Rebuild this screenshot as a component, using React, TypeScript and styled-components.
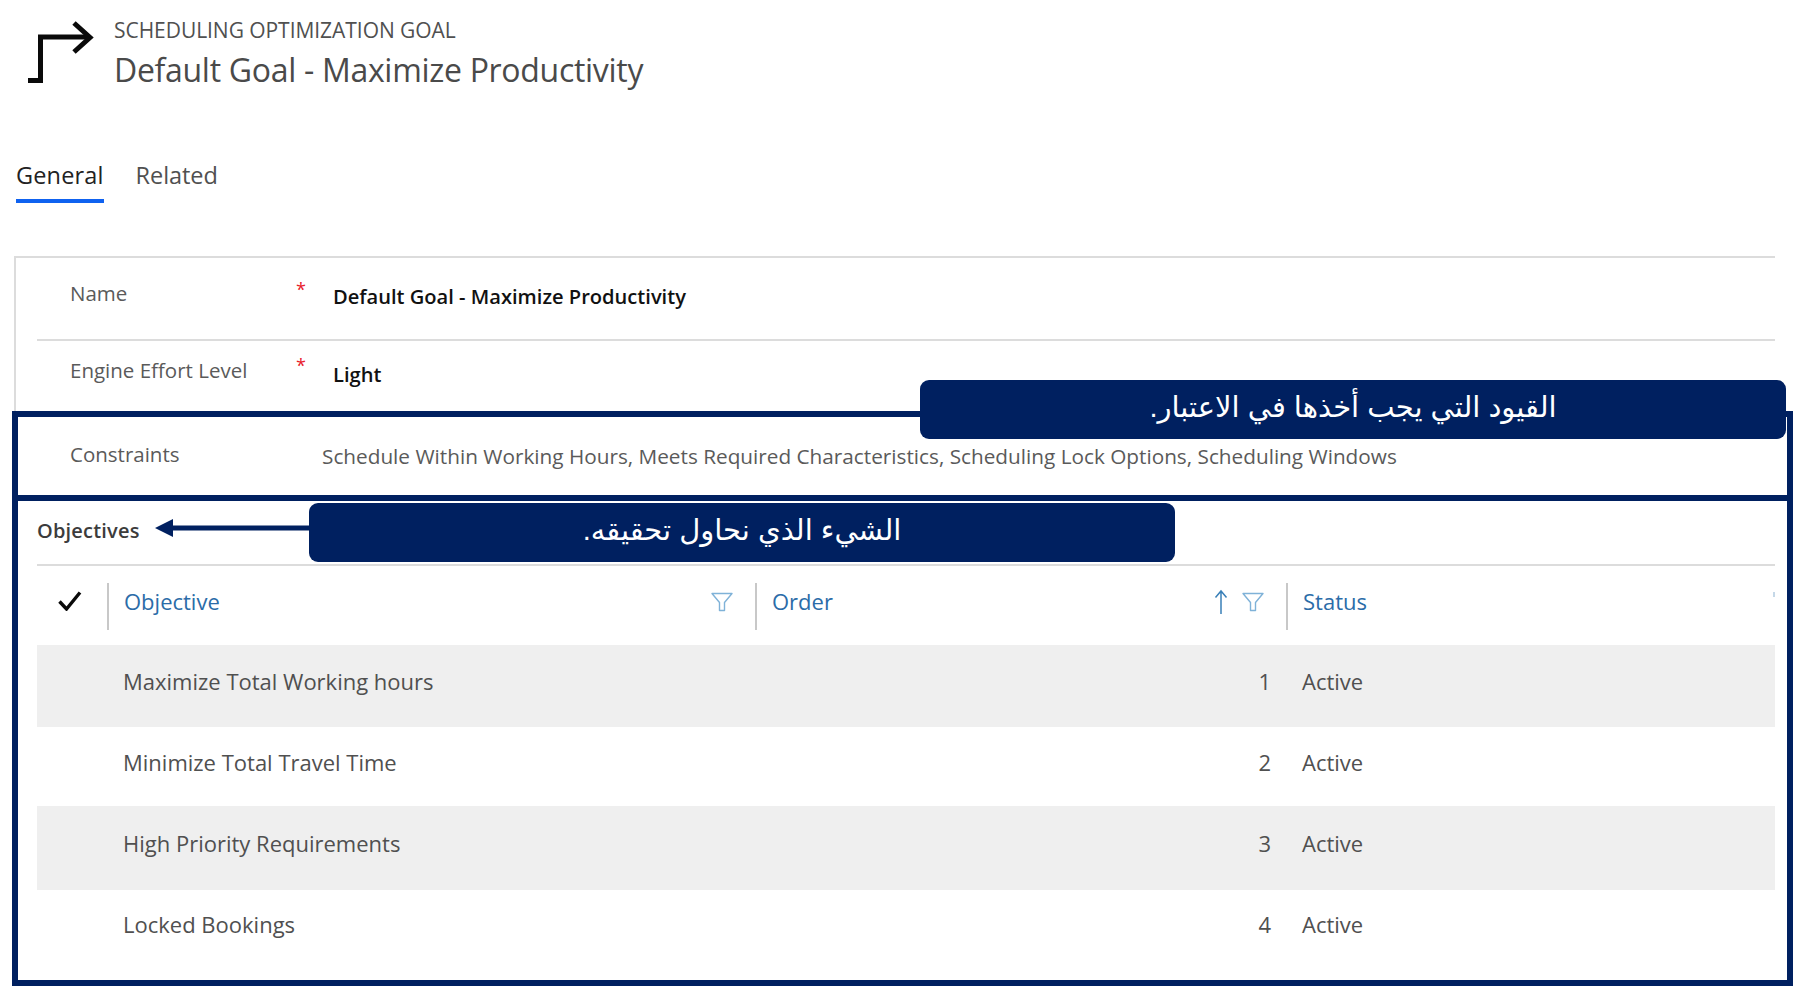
import React from "react";
import styled, { createGlobalStyle } from "styled-components";

const Global = createGlobalStyle`
  html, body { margin: 0; padding: 0; background: #fff; }
  body { font-family: "Open Sans", "Noto Sans", Arial, sans-serif; }
`;

const NAVY = "#002060";
const UI = `"Open Sans", "Noto Sans", sans-serif`;

const Page = styled.div`
  width: 1793px;
  height: 986px;
  overflow: hidden;
  background: #fff;
  color: #505050;
  font-family: ${UI};
`;

const Header = styled.header`
  display: flex;
  height: 160px;
  padding-left: 26px;
  box-sizing: border-box;
`;

const EntityIcon = styled.svg`
  width: 68px;
  height: 64px;
  margin-top: 20px;
  flex: none;
`;

const Titles = styled.div`
  margin-left: 20px;
  padding-top: 17px;
`;

const Eyebrow = styled.div`
  font-size: 21px;
  line-height: 26px;
  letter-spacing: -0.05px;
  color: #505050;
  white-space: nowrap;
`;

const Title = styled.h1`
  margin: 7px 0 0;
  font-size: 32px;
  line-height: 40px;
  font-weight: 400;
  letter-spacing: -0.3px;
  color: #4a4a4a;
  white-space: nowrap;
`;

const Tabs = styled.nav`
  display: flex;
  gap: 32px;
  height: 43px;
  padding-left: 16px;
`;

const Tab = styled.div<{ $active?: boolean }>`
  box-sizing: border-box;
  height: 43px;
  padding-top: 1px;
  font-size: 23.5px;
  line-height: 28px;
  letter-spacing: ${(p) => (p.$active ? "0.15px" : "-0.05px")};
  color: ${(p) => (p.$active ? "#222" : "#505050")};
  border-bottom: 4px solid ${(p) => (p.$active ? "#0f62f0" : "transparent")};
`;

const Card = styled.section`
  margin: 53px 0 0 14px;
  width: 1759px;
  border-top: 2px solid #dcdcdc;
  border-left: 2px solid #dcdcdc;
`;

const FieldRow = styled.div<{ $height: number; $divider?: boolean }>`
  box-sizing: border-box;
  height: ${(p) => p.$height}px;
  margin-left: 21px;
  padding-left: 33px;
  display: flex;
  align-items: flex-start;
  border-bottom: ${(p) => (p.$divider ? "2px solid #dcdcdc" : "none")};
`;

const FieldLabel = styled.div<{ $top: number }>`
  width: 226px;
  flex: none;
  margin-top: ${(p) => p.$top}px;
  font-size: 20.5px;
  line-height: 26px;
  color: #5a5a5a;
`;

const Required = styled.div<{ $top: number }>`
  width: 37px;
  flex: none;
  margin-top: ${(p) => p.$top}px;
  font-size: 18px;
  line-height: 18px;
  color: #e8202a;
`;

const FieldValue = styled.div<{ $top: number }>`
  margin-top: ${(p) => p.$top}px;
  font-size: 20.1px;
  line-height: 26px;
  font-weight: 600;
  color: #111;
  white-space: nowrap;
`;

const Frame = styled.div`
  position: relative;
  box-sizing: border-box;
  margin-left: -4px;
  width: 1781px;
  height: 575px;
  border: 6px solid ${NAVY};
`;

const ConstraintsRow = styled.div`
  box-sizing: border-box;
  height: 84px;
  padding-left: 52px;
  display: flex;
  align-items: flex-start;
  border-bottom: 6px solid ${NAVY};
`;

const ConstraintLabel = styled.div`
  width: 252px;
  flex: none;
  margin-top: 24px;
  font-size: 20.5px;
  line-height: 26px;
  color: #5a5a5a;
`;

const ConstraintValue = styled.div`
  margin-top: 26px;
  font-size: 20.75px;
  line-height: 26px;
  color: #5a5a5a;
  white-space: nowrap;
`;

const Objectives = styled.div`
  padding: 0 12px 0 19px;
`;

const SectionHead = styled.div`
  box-sizing: border-box;
  height: 65px;
  padding-top: 17px;
  font-size: 20px;
  line-height: 26px;
  font-weight: 600;
  letter-spacing: 0.2px;
  color: #3c3c3c;
  border-bottom: 2px solid #dcdcdc;
`;

const columns = "70px 648px 531px 1fr";

const GridHead = styled.div`
  display: grid;
  grid-template-columns: ${columns};
  height: 79px;
  position: relative;
`;

const CheckCell = styled.div`
  display: flex;
  padding: 25px 0 0 21px;
`;

const HeadCell = styled.div`
  box-sizing: border-box;
  height: 47px;
  margin-top: 17px;
  border-left: 2px solid #c8c8c8;
  padding: 5px 21px 0 15px;
  display: flex;
  align-items: flex-start;
  gap: 7px;
  font-size: 22px;
  line-height: 26px;
  color: #2b6ca8;
`;

const HeadText = styled.span`
  flex: 1;
`;

const FilterIcon = styled.svg`
  width: 24px;
  height: 20px;
  margin-top: 4px;
  flex: none;
`;

const SortIcon = styled.svg`
  width: 14px;
  height: 26px;
  margin: 1px 6px 0 0;
  flex: none;
`;

const EdgeMark = styled.span`
  position: absolute;
  right: 0;
  top: 26px;
  width: 2px;
  height: 5px;
  background: #c5d8e8;
`;

const Row = styled.div<{ $height: number; $pad: number; $shaded?: boolean }>`
  display: grid;
  grid-template-columns: ${columns};
  box-sizing: border-box;
  height: ${(p) => p.$height}px;
  padding-top: ${(p) => p.$pad}px;
  background: ${(p) => (p.$shaded ? "#efefef" : "#fff")};
  font-size: 22px;
  line-height: 26px;
  color: #505050;
`;

const Cell = styled.div<{ $align?: string; $pad: string }>`
  text-align: ${(p) => p.$align || "left"};
  padding: ${(p) => p.$pad};
  white-space: nowrap;
`;

const Callout = styled.div<{ $left: number; $top: number }>`
  position: absolute;
  left: ${(p) => p.$left}px;
  top: ${(p) => p.$top}px;
  box-sizing: border-box;
  width: 866px;
  height: 59px;
  padding-bottom: 5px;
  border-radius: 9px;
  background: ${NAVY};
  color: #fff;
  display: flex;
  align-items: center;
  justify-content: center;
  font-family: "Liberation Sans", "DejaVu Sans", sans-serif;
  font-size: 29px;
  direction: rtl;
  white-space: nowrap;
`;

const PointerArrow = styled.svg`
  position: absolute;
  left: 137px;
  top: 102px;
  width: 155px;
  height: 18px;
`;

const Filter = () => (
  <FilterIcon viewBox="0 0 24 20" fill="none" stroke="#7fb2d8" strokeWidth="1.4">
    <path d="M2 1.5H22L14.5 10.5V18.5H9.5V10.5Z" strokeLinejoin="round" />
  </FilterIcon>
);

const rows = [
  { name: "Maximize Total Working hours", order: 1, height: 82, pad: 23 },
  { name: "Minimize Total Travel Time", order: 2, height: 79, pad: 22 },
  { name: "High Priority Requirements", order: 3, height: 84, pad: 24 },
  { name: "Locked Bookings", order: 4, height: 90, pad: 21 },
];

export default function App() {
  return (
    <Page>
      <Global />
      <Header>
        <EntityIcon viewBox="0 0 68 64" fill="none" stroke="#0a0a0a">
          <path d="M2 60.5H14.5V17H63" strokeWidth="5" />
          <path d="M48 3L64 17.5L48 32" strokeWidth="5" />
        </EntityIcon>
        <Titles>
          <Eyebrow>SCHEDULING OPTIMIZATION GOAL</Eyebrow>
          <Title>Default Goal - Maximize Productivity</Title>
        </Titles>
      </Header>
      <Tabs>
        <Tab $active>General</Tab>
        <Tab>Related</Tab>
      </Tabs>
      <Card>
        <FieldRow $height={83} $divider>
          <FieldLabel $top={22}>Name</FieldLabel>
          <Required $top={22}>*</Required>
          <FieldValue $top={26}>Default Goal - Maximize Productivity</FieldValue>
        </FieldRow>
        <FieldRow $height={70}>
          <FieldLabel $top={16}>Engine Effort Level</FieldLabel>
          <Required $top={15}>*</Required>
          <FieldValue $top={21}>Light</FieldValue>
        </FieldRow>
        <Frame>
          <ConstraintsRow>
            <ConstraintLabel>Constraints</ConstraintLabel>
            <ConstraintValue>
              Schedule Within Working Hours, Meets Required Characteristics, Scheduling Lock Options, Scheduling Windows
            </ConstraintValue>
          </ConstraintsRow>
          <Objectives>
            <SectionHead>Objectives</SectionHead>
            <GridHead>
              <CheckCell>
                <svg width="24" height="20" viewBox="0 0 24 20" fill="none" stroke="#0a0a0a" strokeWidth="3.4">
                  <path d="M1.5 10.5L8.5 18L22 1.5" />
                </svg>
              </CheckCell>
              <HeadCell>
                <HeadText>Objective</HeadText>
                <Filter />
              </HeadCell>
              <HeadCell>
                <HeadText>Order</HeadText>
                <SortIcon viewBox="0 0 14 26" fill="none" stroke="#3a80b8" strokeWidth="1.5">
                  <path d="M7 25V2M1.5 8.5L7 2L12.5 8.5" />
                </SortIcon>
                <Filter />
              </HeadCell>
              <HeadCell>
                <HeadText>Status</HeadText>
              </HeadCell>
              <EdgeMark />
            </GridHead>
            {rows.map((r, i) => (
              <Row key={r.order} $height={r.height} $pad={r.pad} $shaded={i % 2 === 0}>
                <span />
                <Cell $pad="0 0 0 16px">{r.name}</Cell>
                <Cell $align="right" $pad="0 15px 0 0">{r.order}</Cell>
                <Cell $pad="0 0 0 16px">Active</Cell>
              </Row>
            ))}
          </Objectives>
          <Callout $left={902} $top={-37}>القيود التي يجب أخذها في الاعتبار.</Callout>
          <PointerArrow viewBox="0 0 155 18">
            <path d="M0 9L18 0V6.5H155V11.5H18V18Z" fill={NAVY} />
          </PointerArrow>
          <Callout $left={291} $top={86}>الشيء الذي نحاول تحقيقه.</Callout>
        </Frame>
      </Card>
    </Page>
  );
}
